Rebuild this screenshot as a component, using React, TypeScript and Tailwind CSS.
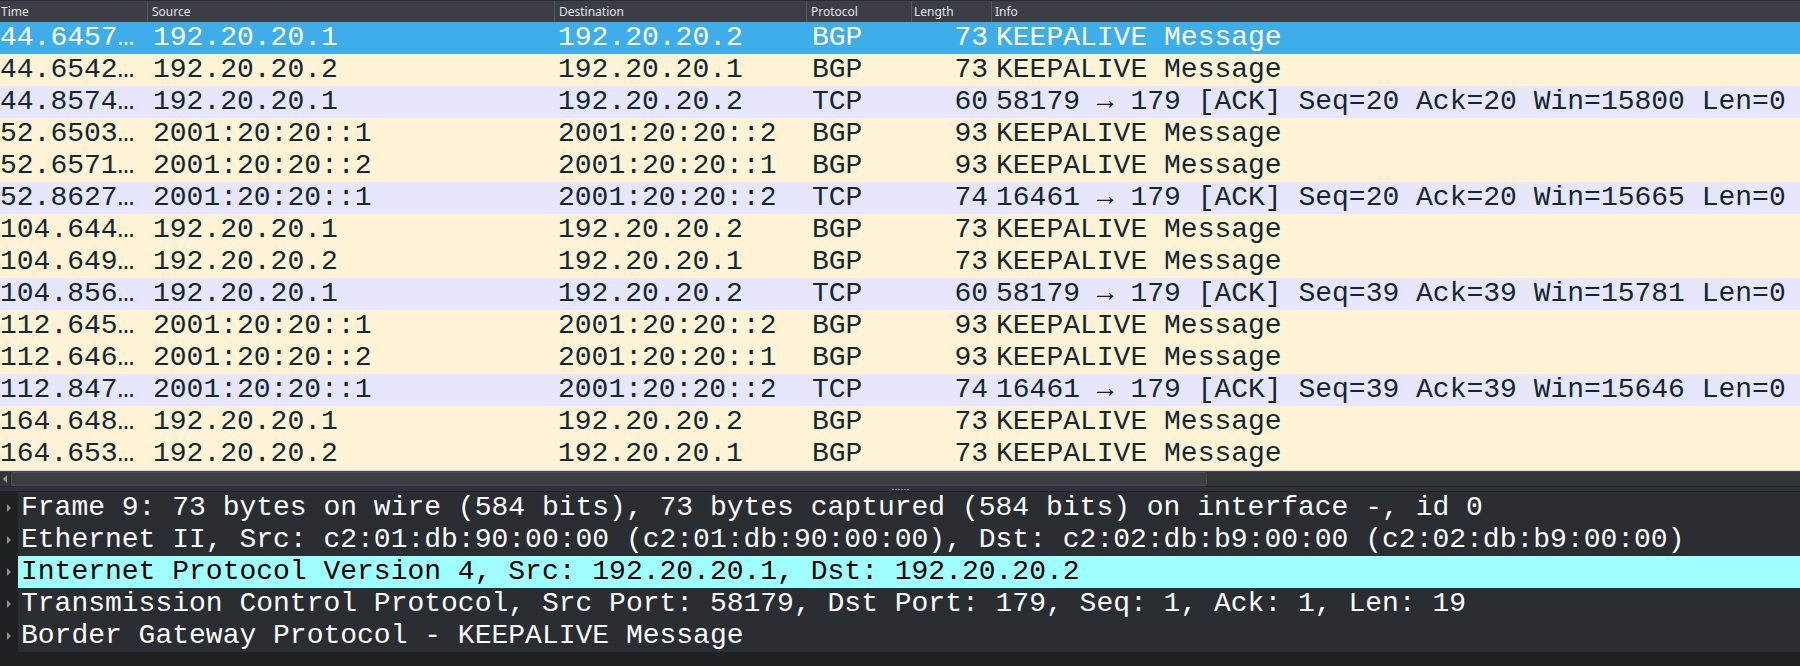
import React from "react";

type Pkt = { t: string; s: string; d: string; p: string; l: string; i: string; sel?: boolean };

const K = "KEEPALIVE Message";
const rows: Pkt[] = [
  { t: "44.6457…", s: "192.20.20.1", d: "192.20.20.2", p: "BGP", l: "73", i: K, sel: true },
  { t: "44.6542…", s: "192.20.20.2", d: "192.20.20.1", p: "BGP", l: "73", i: K },
  { t: "44.8574…", s: "192.20.20.1", d: "192.20.20.2", p: "TCP", l: "60", i: "58179 → 179 [ACK] Seq=20 Ack=20 Win=15800 Len=0" },
  { t: "52.6503…", s: "2001:20:20::1", d: "2001:20:20::2", p: "BGP", l: "93", i: K },
  { t: "52.6571…", s: "2001:20:20::2", d: "2001:20:20::1", p: "BGP", l: "93", i: K },
  { t: "52.8627…", s: "2001:20:20::1", d: "2001:20:20::2", p: "TCP", l: "74", i: "16461 → 179 [ACK] Seq=20 Ack=20 Win=15665 Len=0" },
  { t: "104.644…", s: "192.20.20.1", d: "192.20.20.2", p: "BGP", l: "73", i: K },
  { t: "104.649…", s: "192.20.20.2", d: "192.20.20.1", p: "BGP", l: "73", i: K },
  { t: "104.856…", s: "192.20.20.1", d: "192.20.20.2", p: "TCP", l: "60", i: "58179 → 179 [ACK] Seq=39 Ack=39 Win=15781 Len=0" },
  { t: "112.645…", s: "2001:20:20::1", d: "2001:20:20::2", p: "BGP", l: "93", i: K },
  { t: "112.646…", s: "2001:20:20::2", d: "2001:20:20::1", p: "BGP", l: "93", i: K },
  { t: "112.847…", s: "2001:20:20::1", d: "2001:20:20::2", p: "TCP", l: "74", i: "16461 → 179 [ACK] Seq=39 Ack=39 Win=15646 Len=0" },
  { t: "164.648…", s: "192.20.20.1", d: "192.20.20.2", p: "BGP", l: "73", i: K },
  { t: "164.653…", s: "192.20.20.2", d: "192.20.20.1", p: "BGP", l: "73", i: K },
];

const details: { text: string; hl?: boolean }[] = [
  { text: "Frame 9: 73 bytes on wire (584 bits), 73 bytes captured (584 bits) on interface -, id 0" },
  { text: "Ethernet II, Src: c2:01:db:90:00:00 (c2:01:db:90:00:00), Dst: c2:02:db:b9:00:00 (c2:02:db:b9:00:00)" },
  { text: "Internet Protocol Version 4, Src: 192.20.20.1, Dst: 192.20.20.2", hl: true },
  { text: "Transmission Control Protocol, Src Port: 58179, Dst Port: 179, Seq: 1, Ack: 1, Len: 19" },
  { text: "Border Gateway Protocol - KEEPALIVE Message" },
];

const mono = "font-['Liberation_Mono','DejaVu_Sans_Mono',monospace]";

function rowBg(r: Pkt) {
  if (r.sel) return "bg-[#3daee9] text-white";
  if (r.p === "TCP") return "bg-[#e7e6ff] text-[#12272e]";
  return "bg-[#fff3d6] text-[#12272e]";
}

export default function App() {
  return (
    <div className="w-[1800px] h-[666px] bg-[#1f2225] overflow-hidden flex flex-col">
      {/* header */}
      <div className="h-[22px] flex bg-[#3b3e44] border-t border-[#2a2d31] text-[12px] text-[#e3e5e7] font-['Noto_Sans',sans-serif] leading-none">
        <div className="w-[148px] flex items-center pl-[1px] border-r border-[#55595f]">Time</div>
        <div className="w-[407px] flex items-center pl-[4px] border-r border-[#55595f]">Source</div>
        <div className="w-[252px] flex items-center pl-[4px] border-r border-[#55595f]">Destination</div>
        <div className="w-[105px] flex items-center pl-[4px] border-r border-[#55595f]">Protocol</div>
        <div className="w-[80px] flex items-center pl-[2px] border-r border-[#55595f]">Length</div>
        <div className="flex-1 flex items-center pl-[3px]">Info</div>
      </div>
      {/* packet list */}
      <div className={`flex flex-col ${mono} text-[28px] leading-none`}>
        {rows.map((r, idx) => (
          <div key={idx} className={`h-8 flex items-center whitespace-nowrap ${rowBg(r)}`}>
            <div className="w-[148px] pl-0">{r.t}</div>
            <div className="w-[407px] pl-[5px]">{r.s}</div>
            <div className="w-[252px] pl-[3px]">{r.d}</div>
            <div className="w-[105px] pl-[5px]">{r.p}</div>
            <div className="w-[80px] pr-[4px] text-right">{r.l}</div>
            <div className="flex-1 pl-[4px]">{r.i}</div>
          </div>
        ))}
      </div>
      <div className="h-px bg-[#d7d5f5]" />
      {/* horizontal scrollbar */}
      <div className="h-4 flex bg-[#31363b] border-t border-[#43474d] border-b border-b-[#232629]">
        <div className="w-[11px] flex items-center justify-center border-r border-[#26292d]">
          <svg width="5" height="8" viewBox="0 0 5 8"><path d="M4 0 L0 4 L4 8 Z" fill="#9a9da1" /></svg>
        </div>
        <div className="w-[1196px] bg-[#3b3f45] border border-[#4a4e54] rounded-[2px]" />
        <div className="flex-1" />
      </div>
      {/* splitter */}
      <div className="h-1 bg-[#2f3338] flex items-center justify-center">
        <div className="flex gap-[1px]">
          {[0, 1, 2, 3, 4, 5].map((k) => (
            <div key={k} className="w-[2px] h-[1px] bg-[#7b7f84]" />
          ))}
        </div>
      </div>
      {/* details tree */}
      <div className={`flex flex-col ${mono} text-[28px] leading-none pt-px`}>
        {details.map((d, idx) => (
          <div key={idx} className="h-8 flex">
            <div className="w-[18px] flex items-center justify-center bg-[#1f2225]">
              <svg width="4" height="8" viewBox="0 0 4 8"><path d="M0 0 L4 4 L0 8 Z" fill="#8d9094" /></svg>
            </div>
            <div className={`flex-1 flex items-center pl-[3px] whitespace-nowrap ${d.hl ? "bg-[#9ffeff] text-black" : "bg-[#2a2e32] text-[#fcfcfc]"}`}>
              {d.text}
            </div>
          </div>
        ))}
      </div>
    </div>
  );
}
